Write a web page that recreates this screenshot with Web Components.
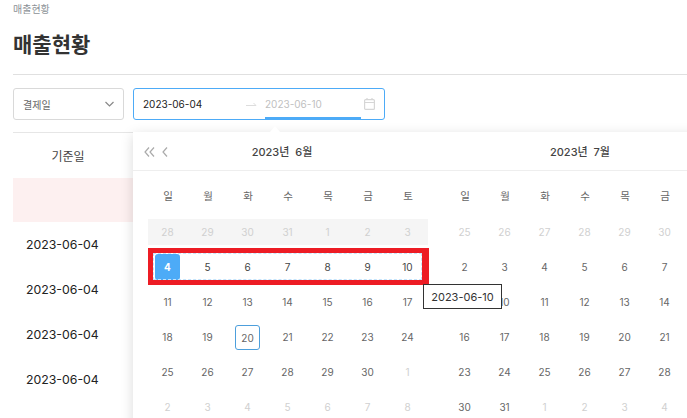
<!DOCTYPE html>
<html lang="ko">
<head>
<meta charset="utf-8">
<title>매출현황</title>
<style>
  html, body { margin: 0; padding: 0; height: 100%; overflow: hidden; background: #fff; }
  body { font-family: Inter, "Noto Sans CJK KR", sans-serif; color: #333; }
</style>
</head>
<body>
<sales-page></sales-page>

<script>
const FONT = 'Inter, "Noto Sans CJK KR", sans-serif';

class SalesTable extends HTMLElement {
  constructor() {
    super();
    this.attachShadow({ mode: 'open' });
    const rows = ['2023-06-04', '2023-06-04', '2023-06-04', '2023-06-04'];
    this.shadowRoot.innerHTML = `
      <style>
        :host { display: block; border-top: 1px solid #e6e6e6; font: 12px ${FONT}; color: #222; }
        .head { height: 45px; display: flex; align-items: center; justify-content: center; width: 110px; color: #444; }
        .total { height: 44px; background: #fdf0f0; }
        .row { height: 45px; display: flex; align-items: center; padding-left: 13px; font-size: 12.3px; }
      </style>
      <div class="head">기준일</div>
      <div class="total"></div>
      ${rows.map(d => `<div class="row">${d}</div>`).join('')}
    `;
  }
}

class DateBar extends HTMLElement {
  constructor() {
    super();
    this.attachShadow({ mode: 'open' });
    this.shadowRoot.innerHTML = `
      <style>
        :host { display: flex; gap: 9px; font: 10px ${FONT}; }
        .select { width: 111px; height: 32px; box-sizing: border-box; border: 1px solid #d9d9d9; border-radius: 3px; display: flex; align-items: center; justify-content: space-between; padding: 0 9px 0 9px; color: #666; }
        .range { width: 252px; height: 32px; box-sizing: border-box; border: 1px solid #4dabf7; border-radius: 3px; display: flex; align-items: center; padding: 0 9px; position: relative; }
        .start { width: 102px; color: #222; }
        .sep { width: 20px; display: flex; padding-left: 1px; box-sizing: border-box; }
        .end { flex: 1; color: #bfbfbf; }
        .ink { position: absolute; left: 131px; bottom: 0; width: 96px; height: 2px; background: #4dabf7; }
        svg { display: block; }
      </style>
      <div class="select">결제일
        <svg width="9" height="6" viewBox="0 0 9 6" fill="none" stroke="#888" stroke-width="1.2"><path d="M.5 1l4 4 4-4"/></svg>
      </div>
      <div class="range">
        <span class="start">2023-06-04</span>
        <span class="sep"><svg width="11" height="6" viewBox="0 0 11 6" fill="none" stroke="#ddd"><path d="M0 4.5h10L7.5 2"/></svg></span>
        <span class="end">2023-06-10</span>
        <svg width="11" height="12" viewBox="0 0 11 12" fill="none" stroke="#d6d6d6" stroke-width="1.2"><rect x=".6" y="1.6" width="9.8" height="9.8" rx="1"/><path d="M.6 4.5h9.8M3 0v2M8 0v2"/></svg>
        <i class="ink"></i>
      </div>
    `;
  }
}

class CalMonth extends HTMLElement {
  constructor() {
    super();
    this.attachShadow({ mode: 'open' });
    const cells = JSON.parse(this.getAttribute('cells'));
    const title = this.getAttribute('title-text');
    const nav = this.hasAttribute('nav');
    const week = ['일', '월', '화', '수', '목', '금', '토'];
    this.shadowRoot.innerHTML = `
      <style>
        :host { display: block; width: 280px; flex: none; font: 10px ${FONT}; color: #666; }
        .top { height: 38px; display: flex; align-items: center; justify-content: center; position: relative; font-weight: 500; color: #444; font-size: 11px; word-spacing: 3px; padding-right: var(--title-shift, 12px); box-sizing: border-box; }
        .nav { position: absolute; left: -4px; top: 15px; display: flex; gap: 7px; }
        .grid { display: grid; grid-template-columns: repeat(7, 40px); margin-top: 7px; }
        .wk { height: 37px; padding-bottom: 1px; box-sizing: border-box; display: flex; align-items: center; justify-content: center; color: #666; font-size: 10.5px; }
        .cell { height: 35px; display: flex; align-items: center; justify-content: center; }
        .cell span { width: 25px; height: 25px; margin-right: 1px; box-sizing: border-box; display: flex; align-items: center; justify-content: center; border-radius: 3px; }
        .out { color: #d0d0d0; }
        .dim { color: #d0d0d0; height: 26px; margin: 5px 0 4px; background: #f5f5f5; }
        .cur { color: #444; }
        .sel span { background: #4dabf7; color: #fff; font-weight: 700; height: 26px; margin-top: 1px; }
        .today span { border: 1px solid #4d9fdc; margin-top: 2px; }
        svg { display: block; }
      </style>
      <div class="top">
        ${nav ? `<div class="nav">
          <svg width="11" height="10" viewBox="0 0 11 10" fill="none" stroke="#aaa" stroke-width="1.2"><path d="M5 .5L1 5l4 4.5M10 .5L6 5l4 4.5"/></svg>
          <svg width="6" height="10" viewBox="0 0 6 10" fill="none" stroke="#aaa" stroke-width="1.2"><path d="M5 .5L1 5l4 4.5"/></svg>
        </div>` : ''}
        ${title}
      </div>
      <div class="grid">
        ${week.map(w => `<div class="wk">${w}</div>`).join('')}
        ${cells.map(c => `<div class="cell ${c[1] || ''}"><span>${c[0]}</span></div>`).join('')}
      </div>
    `;
  }
}

class SalesPage extends HTMLElement {
  constructor() {
    super();
    this.attachShadow({ mode: 'open' });
    const mk = (from, to, cls) => {
      const r = [];
      for (let i = from; i <= to; i++) r.push([i, cls]);
      return r;
    };
    const june = [
      ...mk(28, 31, 'dim'), ...mk(1, 3, 'dim'),
      [4, 'sel cur'], ...mk(5, 10, 'cur'),
      ...mk(11, 19, ''), [20, 'today'], ...mk(21, 30, ''),
      ...mk(1, 8, 'out')
    ];
    const july = [
      ...mk(25, 30, 'out'), [1, 'out'],
      ...mk(2, 31, ''), ...mk(1, 5, 'out')
    ];
    this.shadowRoot.innerHTML = `
      <style>
        :host { display: block; height: 418px; overflow: hidden; position: relative; padding-left: 13px; box-sizing: border-box; font-family: ${FONT}; }
        .crumb { font-size: 10px; color: #8c9196; line-height: 12px; padding-top: 3px; }
        h1 { margin: 14px 0 0; font-size: 21px; line-height: 32px; font-weight: 700; color: #333; }
        hr { border: 0; border-top: 1px solid #e0e0e0; margin: 13px 0 13px; }
        date-bar { margin-bottom: 12px; }
        .pop { position: absolute; left: 133px; top: 132px; width: 600px; height: 300px; background: #fff; box-shadow: 0 3px 12px rgba(0,0,0,.15); display: flex; gap: 17px; padding-left: 15px; box-sizing: border-box; }
        .pop::before { content: ""; position: absolute; left: 0; right: 0; top: 38px; border-top: 1px solid #eee; }
        .caret { position: absolute; left: 270px; top: 126px; width: 10px; height: 6px; background: #fff; clip-path: polygon(50% 0, 100% 100%, 0 100%); }
        .mark { position: absolute; left: 148px; top: 248px; width: 281px; height: 37px; box-sizing: border-box; border: 5px solid #ed1c24; border-right-width: 7px; }
        .mark::after { content: ""; position: absolute; inset: 0; border: 1px dashed #c4e4fc; }
        .tip { position: absolute; left: 423px; top: 284px; width: 79px; height: 25px; box-sizing: border-box; background: #fff; border: 1px solid #333; font-size: 11px; color: #333; display: flex; align-items: center; justify-content: center; }
      </style>
      <div class="crumb">매출현황</div>
      <h1>매출현황</h1>
      <hr>
      <date-bar></date-bar>
      <sales-table></sales-table>
      <div class="pop">
        <cal-month nav title-text="2023년 6월" cells='${JSON.stringify(june)}'></cal-month>
        <cal-month style="--title-shift: 10px" title-text="2023년 7월" cells='${JSON.stringify(july)}'></cal-month>
      </div>
      <i class="caret"></i>
      <i class="mark"></i>
      <div class="tip">2023-06-10</div>
    `;
  }
}

customElements.define('sales-table', SalesTable);
customElements.define('date-bar', DateBar);
customElements.define('cal-month', CalMonth);
customElements.define('sales-page', SalesPage);
</script>
</body>
</html>
